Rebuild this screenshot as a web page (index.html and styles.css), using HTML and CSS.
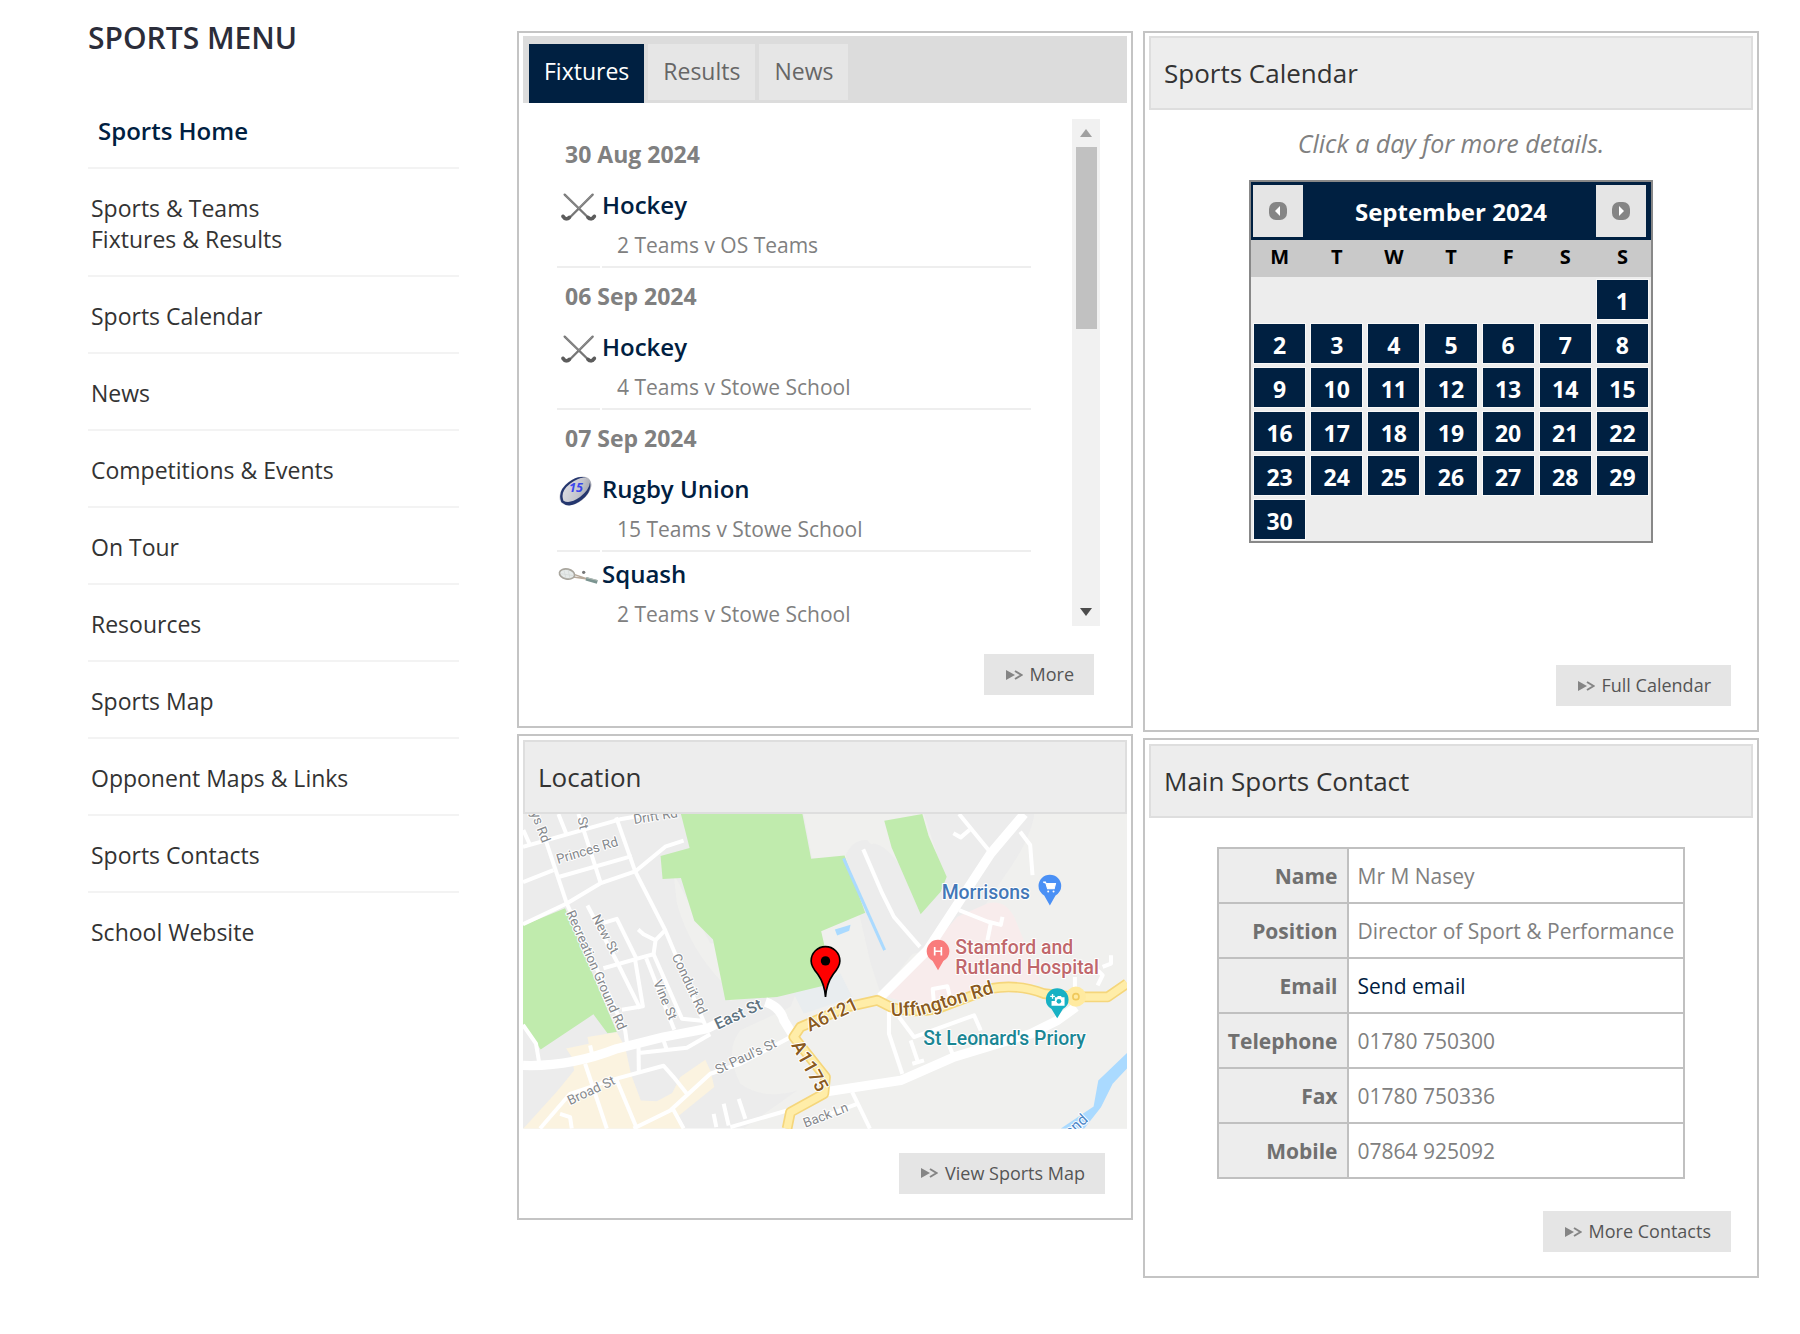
FILE: index.html
```
<!DOCTYPE html>
<html lang="en">
<head>
  <meta charset="UTF-8">
  <title>Sports Home</title>
  <link rel="stylesheet" href="styles.css">
</head>
<body>
  <!-- Shared icons -->
  <svg class="sprite" aria-hidden="true">
    <symbol id="arrow" viewBox="0 0 34 20">
      <path d="M0 0 L18 10 L0 20 Z" fill="#858585"/>
      <path d="M18 2 L31 10 L18 18" fill="none" stroke="#858585" stroke-width="4"/>
    </symbol>
    <symbol id="hockey" viewBox="0 0 120 90">
      <g fill="none" stroke-linecap="round" stroke-linejoin="round">
        <path d="M20 8 L92 78 Q102 86 109 72 M104 8 L34 78 Q22 86 15 72" stroke="#777" stroke-width="7"/>
        <path d="M90 76 Q100 86 109 73 M34 76 Q24 86 15 73" stroke="#5c5c5c" stroke-width="11"/>
        <path d="M22 9 L62 49 M102 9 L62 49" stroke="#999" stroke-width="2"/>
      </g>
    </symbol>
  </svg>

  <div class="page">
    <nav class="menu">
      <h2>SPORTS MENU</h2>
      <ul>
        <li><a class="current" href="#">Sports Home</a></li>
        <li><a href="#">Sports &amp; Teams<br>Fixtures &amp; Results</a></li>
        <li><a href="#">Sports Calendar</a></li>
        <li><a href="#">News</a></li>
        <li><a href="#">Competitions &amp; Events</a></li>
        <li><a href="#">On Tour</a></li>
        <li><a href="#">Resources</a></li>
        <li><a href="#">Sports Map</a></li>
        <li><a href="#">Opponent Maps &amp; Links</a></li>
        <li><a href="#">Sports Contacts</a></li>
        <li><a href="#">School Website</a></li>
      </ul>
    </nav>

    <div class="column">
      <section class="panel">
        <div class="tabs">
          <button type="button" class="tab active">Fixtures</button>
          <button type="button" class="tab">Results</button>
          <button type="button" class="tab">News</button>
        </div>
        <div class="scroller">
          <div class="fixtures">
            <h3>30 Aug 2024</h3>
            <div class="fixture">
              <div class="sport-icon"><svg><use href="#hockey"/></svg></div>
              <div class="sport"><a href="#">Hockey</a><p>2 Teams v OS Teams</p></div>
            </div>
            <h3>06 Sep 2024</h3>
            <div class="fixture">
              <div class="sport-icon"><svg><use href="#hockey"/></svg></div>
              <div class="sport"><a href="#">Hockey</a><p>4 Teams v Stowe School</p></div>
            </div>
            <h3>07 Sep 2024</h3>
            <div class="fixture">
              <div class="sport-icon">
                <svg viewBox="0 0 120 90">
                  <defs>
                    <linearGradient id="ball" x1="0" y1="0" x2="1" y2="1">
                      <stop offset="0" stop-color="#e4e4ea"/>
                      <stop offset=".6" stop-color="#c3c4cc"/>
                      <stop offset="1" stop-color="#8d8f9c"/>
                    </linearGradient>
                  </defs>
                  <g transform="rotate(-38 52 45)">
                    <ellipse cx="52" cy="45" rx="55" ry="34" fill="url(#ball)"/>
                    <path d="M-2 46 Q8 11 52 12 Q92 12 104 38 Q92 19 54 18 Q14 18 6 46 Q14 66 52 68 Q88 68 102 52 Q90 78 50 78 Q4 78 -2 46 Z" fill="#24366e"/>
                  </g>
                  <text x="54" y="49" class="ball-number">15</text>
                </svg>
              </div>
              <div class="sport"><a href="#">Rugby Union</a><p>15 Teams v Stowe School</p></div>
            </div>
            <div class="fixture">
              <div class="sport-icon">
                <svg viewBox="0 0 120 90">
                  <path d="M48 40 L88 54 M46 48 L88 54" stroke="#b7a99a" stroke-width="4" fill="none"/>
                  <ellipse cx="27" cy="39" rx="23" ry="15" transform="rotate(12 27 39)" fill="#e6eae9" stroke="#a8a59d" stroke-width="5"/>
                  <path d="M18 28 L24 52 M30 26 L36 52 M8 38 L46 44" stroke="#d3d8d6" stroke-width="2"/>
                  <path d="M84 53 L118 63" stroke="#7b9490" stroke-width="11"/>
                  <path d="M84 50 L118 58" stroke="#b4bdb8" stroke-width="3"/>
                  <circle cx="77" cy="34" r="5" fill="#777"/>
                </svg>
              </div>
              <div class="sport"><a href="#">Squash</a><p>2 Teams v Stowe School</p></div>
            </div>
          </div>
          <div class="scrollbar">
            <svg viewBox="0 0 12 8"><path d="M0 8 L6 0 L12 8 Z" fill="#a0a0a0"/></svg>
            <div class="thumb"></div>
            <svg viewBox="0 0 12 8"><path d="M0 0 L6 8 L12 0 Z" fill="#4c4c4c"/></svg>
          </div>
        </div>
        <div class="actions inset">
          <a class="button" href="#"><svg><use href="#arrow"/></svg>More</a>
        </div>
      </section>

      <section class="panel">
        <h2>Location</h2>
        <svg class="map" viewBox="39 252 1809 942" preserveAspectRatio="xMidYMid slice">
          <rect x="39" y="252" width="1809" height="942" fill="#ececec"/>
          <!-- lighter land -->
          <path d="M490 430 L500 520 Q540 660 640 760 L660 812 L860 780 L840 830 L690 900 Q640 960 690 1060 Q760 1110 860 1080 L700 1194 L1848 1194 L1848 252 L1570 252 Q1560 330 1480 440 L1400 560 L1290 650 L1090 700 Q1090 560 1020 480 Q1010 360 1090 340 Q1150 350 1220 500 L1300 460 Q1300 340 1270 252 L880 252 L905 385 L930 385 L930 600 L600 640 Z" fill="#f0f0ee"/>
          <path d="M1005 375 Q1030 325 1070 330 L1150 420 L1230 640 L1110 790 L1080 700 Z" fill="#ececec"/>
          <path d="M1240 252 L1570 252 Q1560 330 1440 470 L1300 640 L1230 550 L1310 470 Z" fill="#ececec"/>
          <path d="M850 790 L990 730 L1025 800 L880 850 Z" fill="#e9edef"/>
          <!-- parks -->
          <g fill="#c0ebad">
            <path d="M512 252 L876 252 L902 386 L1002 376 L1064 548 L932 603 L945 660 L945 765 L800 800 L645 810 L608 628 L552 572 L512 444 L457 447 L451 378 L538 354 Z"/>
            <path d="M39 586 L165 534 L320 905 L292 909 L250 852 L92 957 L39 880 Z"/>
            <path d="M1121 272 L1235 252 L1254 318 L1308 440 L1290 485 L1230 552 L1143 352 Z"/>
          </g>
          <!-- town centre -->
          <g fill="#fbf3e0">
            <path d="M168 954 L236 940 L232 920 L320 906 L345 950 L362 1030 L392 1110 L440 1112 L500 1080 L530 1100 L500 1140 L520 1194 L100 1194 L40 1194 L140 1084 L192 1020 L185 980 Z"/>
            <path d="M510 1040 L585 988 L600 1020 L612 1070 L500 1160 L470 1120 Z"/>
          </g>
          <!-- hospital grounds -->
          <path d="M1130 800 L1340 560 L1430 520 Q1480 505 1510 560 L1590 755 L1460 790 L1240 830 Z" fill="#f8ecec"/>
          <!-- water -->
          <g fill="#aadaff">
            <path d="M973 598 L1020 584 L1016 602 L980 616 Z"/>
            <path d="M1848 968 L1848 1014 L1805 1060 L1770 1130 L1720 1194 L1650 1194 L1748 1128 L1762 1050 Z"/>
          </g>
          <path d="M999 385 L1122 660" stroke="#aadaff" stroke-width="9"/>
          <!-- streets -->
          <g class="street">
            <path d="M39 350 L330 268 L420 252"/>
            <path d="M39 456 L130 420 M148 440 L365 378"/>
            <path d="M100 310 L170 520 L345 900 L352 950"/>
            <path d="M39 582 L170 520 L270 460 L375 424 L465 350 L520 332"/>
            <path d="M318 262 L375 424 L465 600 L585 885"/>
            <path d="M145 252 L168 310 M205 252 L272 460 M40 300 L60 345"/>
            <path d="M232 526 L318 690 L390 835 M280 578 L320 566 L378 684"/>
            <path d="M280 714 L400 680 L430 672 L436 630 L465 600 M436 630 L400 612 L384 598"/>
            <path d="M374 684 L398 828 L335 838 M408 684 L492 898 M430 672 L515 865 L582 872"/>
            <path d="M39 884 L78 940 L88 1000"/>
            <path d="M385 950 L386 1030 M460 930 L470 960 M386 968 L530 952 L600 912"/>
            <path d="M90 1194 L180 1090 L300 1050 L460 1006 L490 1040 L530 1090"/>
            <path d="M225 1000 L290 1194 M320 1050 L380 1194 M240 945 L250 990 M150 1150 L180 1160 L185 1194"/>
            <path d="M370 1194 L480 1140 L600 1030 L690 1000 L850 915 M485 1130 L520 1194"/>
            <path d="M640 1120 L655 1185 M685 1105 L705 1165 M610 1150 L618 1190"/>
            <path d="M1058 358 L1115 490 L1150 560 L1228 650"/>
            <path d="M1345 252 L1435 362 M1376 300 L1350 322 L1328 310 M1528 305 L1558 345 L1565 435"/>
            <path d="M1345 540 L1430 574 L1470 584 L1475 560 M1440 580 L1430 630"/>
            <path d="M1270 820 L1266 776 L1310 768 L1318 800 M1692 740 L1692 790 M1760 765 L1775 735 L1760 720 M1775 710 L1800 700 L1800 675"/>
            <path d="M1135 820 L1135 910 L1175 1030 M1165 860 L1210 920 L1390 855 L1410 900 M1200 930 L1222 995 M1205 1000 L1240 990 M1310 930 L1325 970"/>
            <path d="M1025 1085 L1078 1194 M960 1150 L1040 1120"/>
          </g>
          <g class="avenue">
            <path d="M39 1005 Q180 1010 320 955 L460 920 L590 895 L640 870"/>
            <path d="M765 815 Q810 830 820 870 L845 910"/>
            <path d="M1110 800 L1250 660 L1440 370 L1540 252"/>
            <path d="M940 1085 L1170 1050 L1330 980 L1560 910 L1640 870 L1695 830"/>
          </g>
          <path class="street" d="M660 1190 L830 1140"/>
          <!-- main roads -->
          <path class="main-edge" d="M830 1194 L840 1145 L940 1090 L945 1040 L850 920 L870 890 L1010 830 L1100 810 L1140 830 Q1200 850 1280 835 L1440 775 Q1520 760 1600 790 L1690 800 L1790 800 L1848 760"/>
          <path class="main-road" d="M830 1194 L840 1145 L940 1090 L945 1040 L850 920 L870 890 L1010 830 L1100 810 L1140 830 Q1200 850 1280 835 L1440 775 Q1520 760 1600 790 L1690 800 L1790 800 L1848 760"/>
          <circle cx="1695" cy="799" r="30" fill="#ffeaa0"/>
          <circle cx="1695" cy="799" r="9" fill="#ffeaa0" stroke="#f0c95c" stroke-width="5"/>
          <!-- street names -->
          <g class="street-name">
            <text transform="translate(62 250) rotate(69)">ys Rd</text>
            <text transform="translate(202 264) rotate(78)">St</text>
            <text transform="translate(372 282) rotate(-9)">Drift Rd</text>
            <text transform="translate(144 402) rotate(-17)">Princes Rd</text>
            <text transform="translate(168 548) rotate(66)">Recreation Ground Rd</text>
            <text transform="translate(244 562) rotate(62)">New St</text>
            <text transform="translate(428 756) rotate(67)">Vine St</text>
            <text transform="translate(484 678) rotate(65)">Conduit Rd</text>
            <text transform="translate(180 1124) rotate(-25)">Broad St</text>
            <text transform="translate(622 1032) rotate(-25)">St Paul's St</text>
            <text transform="translate(884 1192) rotate(-21)">Back Ln</text>
          </g>
          <text class="east" transform="translate(622 898) rotate(-25)">East St</text>
          <g class="road-name">
            <text transform="translate(898 904) rotate(-25)">A6121</text>
            <text transform="translate(842 944) rotate(61)">A1175</text>
            <text transform="translate(1142 858) rotate(-3)">Uff</text>
            <text transform="translate(1222 858) rotate(-17)">ington Rd</text>
          </g>
          <text class="river" transform="translate(1678 1222) rotate(-43)">and</text>
          <!-- places -->
          <text class="place shop" x="1293" y="506">Morrisons</text>
          <text class="place hospital" x="1334" y="672">Stamford and</text>
          <text class="place hospital" x="1334" y="732">Rutland Hospital</text>
          <text class="place priory" x="1238" y="944">St Leonard's Priory</text>
          <g>
            <path d="M1617 526 L1600 496 Q1583 486 1583 468 A34 34 0 0 1 1651 468 Q1651 486 1634 496 Z" fill="#4a90f5"/>
            <path d="M1597 456 L1604 456 L1610 476 L1630 476 L1634 460 L1606 460 Z" fill="#fff" stroke="#fff" stroke-width="3"/>
            <circle cx="1612" cy="484" r="3" fill="#fff"/><circle cx="1628" cy="484" r="3" fill="#fff"/>
            <path d="M1282 720 L1266 692 Q1248 682 1248 663 A34 34 0 0 1 1316 663 Q1316 682 1298 692 Z" fill="#f97c7c"/>
            <path d="M1272 650 V676 M1292 650 V676 M1272 663 H1292" stroke="#fff" stroke-width="5"/>
            <path d="M1639 864 L1622 836 Q1605 826 1605 808 A34 34 0 0 1 1673 808 Q1673 826 1656 836 Z" fill="#17b1c4"/>
            <path d="M1632 801 H1638 L1641 797 H1650 L1653 801 H1661 V826 H1622 V812 H1632 Z" fill="#fff"/>
            <path d="M1625 791 V805 M1618 798 H1632" stroke="#fff" stroke-width="4"/>
            <circle cx="1644" cy="813" r="7" fill="#17b1c4"/>
          </g>
          <path d="M945 800 Q942 760 922 732 Q902 708 902 692 A43 43 0 0 1 988 692 Q988 708 968 732 Q948 760 945 800 Z" fill="#f00" stroke="#000" stroke-width="5"/>
          <circle cx="945" cy="692" r="14" fill="#000"/>
        </svg>
        <div class="actions">
          <a class="button" href="#"><svg><use href="#arrow"/></svg>View Sports Map</a>
        </div>
      </section>
    </div>

    <div class="column">
      <section class="panel">
        <h2>Sports Calendar</h2>
        <div class="calendar-area">
          <p>Click a day for more details.</p>
          <table class="calendar">
            <thead>
              <tr class="month">
                <th><button type="button" aria-label="Previous month"><svg viewBox="0 0 18 18"><rect width="18" height="18" rx="7" fill="#858585"/><path d="M11 4 L6 9 L11 14 Z" fill="#fff"/></svg></button></th>
                <th colspan="5">September 2024</th>
                <th><button type="button" aria-label="Next month"><svg viewBox="0 0 18 18"><rect width="18" height="18" rx="7" fill="#858585"/><path d="M7 4 L12 9 L7 14 Z" fill="#fff"/></svg></button></th>
              </tr>
              <tr class="weekdays">
                <th>M</th><th>T</th><th>W</th><th>T</th><th>F</th><th>S</th><th>S</th>
              </tr>
            </thead>
            <tbody>
              <tr><td colspan="6"></td><td><a href="#">1</a></td></tr>
              <tr><td><a href="#">2</a></td><td><a href="#">3</a></td><td><a href="#">4</a></td><td><a href="#">5</a></td><td><a href="#">6</a></td><td><a href="#">7</a></td><td><a href="#">8</a></td></tr>
              <tr><td><a href="#">9</a></td><td><a href="#">10</a></td><td><a href="#">11</a></td><td><a href="#">12</a></td><td><a href="#">13</a></td><td><a href="#">14</a></td><td><a href="#">15</a></td></tr>
              <tr><td><a href="#">16</a></td><td><a href="#">17</a></td><td><a href="#">18</a></td><td><a href="#">19</a></td><td><a href="#">20</a></td><td><a href="#">21</a></td><td><a href="#">22</a></td></tr>
              <tr><td><a href="#">23</a></td><td><a href="#">24</a></td><td><a href="#">25</a></td><td><a href="#">26</a></td><td><a href="#">27</a></td><td><a href="#">28</a></td><td><a href="#">29</a></td></tr>
              <tr><td><a href="#">30</a></td><td colspan="6"></td></tr>
            </tbody>
          </table>
        </div>
        <div class="actions">
          <a class="button" href="#"><svg><use href="#arrow"/></svg>Full Calendar</a>
        </div>
      </section>

      <section class="panel">
        <h2>Main Sports Contact</h2>
        <table class="contact">
          <tr><th>Name</th><td>Mr M Nasey</td></tr>
          <tr><th>Position</th><td>Director of Sport &amp; Performance</td></tr>
          <tr><th>Email</th><td><a href="#">Send email</a></td></tr>
          <tr><th>Telephone</th><td>01780 750300</td></tr>
          <tr><th>Fax</th><td>01780 750336</td></tr>
          <tr><th>Mobile</th><td>07864 925092</td></tr>
        </table>
        <div class="actions">
          <a class="button" href="#"><svg><use href="#arrow"/></svg>More Contacts</a>
        </div>
      </section>
    </div>
  </div>
</body>
</html>
```
FILE: styles.css
```
* {
  box-sizing: border-box;
}

body {
  margin: 0;
  background: #fff;
  color: #808080;
  font-family: "Open Sans", sans-serif;
  font-size: 21px;
}

h2, h3, p, ul {
  margin: 0;
  padding: 0;
}

a {
  color: #002041;
  text-decoration: none;
}

button {
  border: 0;
  font-family: inherit;
}

.sprite {
  display: none;
}

.page {
  display: flex;
  align-items: flex-start;
  padding: 0 41px 54px 88px;
}

/* Menu */
.menu {
  width: 371px;
  margin-right: 58px;
  padding-top: 18px;
}

.menu h2 {
  margin-bottom: 33px;
  color: #2b2d3a;
  font-size: 30px;
  font-weight: 600;
  line-height: 40px;
}

.menu ul {
  list-style: none;
}

.menu li {
  padding: 24px 3px 20px;
  border-bottom: 2px solid #f3f3f3;
  font-size: 23px;
  line-height: 31px;
}

.menu li:last-child {
  border-bottom: 0;
}

.menu a {
  color: #333;
}

.menu .current {
  padding-left: 7px;
  color: #002041;
  font-size: 24px;
  font-weight: 600;
}

/* Panels */
.column {
  flex: 1;
  display: flex;
  flex-direction: column;
  gap: 6px;
  padding-top: 31px;
}

.column + .column {
  margin-left: 10px;
}

.panel {
  padding: 4px;
  border: 2px solid #c4c4c4;
}

.panel:first-child {
  padding-top: 3px;
}

.panel h2 {
  padding: 0 13px;
  border: 2px solid #dedede;
  background: #ededed;
  color: #333;
  font-size: 26px;
  font-weight: normal;
  line-height: 70px;
}

.actions {
  display: flex;
  justify-content: flex-end;
  padding: 24px 22px 20px;
}

.actions.inset {
  padding: 28px 33px 27px;
}

.button {
  display: flex;
  align-items: center;
  gap: 7px;
  padding: 0 20px 0 22px;
  background: #e5e5e5;
  color: #555;
  font-size: 18px;
  line-height: 41px;
}

.button svg {
  width: 17px;
  height: 10px;
}

/* Fixtures */
.tabs {
  display: flex;
  align-items: flex-start;
  gap: 4px;
  padding: 8px 6px 0;
  background: #dcdcdc;
}

.tab {
  height: 56px;
  padding: 0 15px 2px;
  background: #e6e6e6;
  color: #666;
  font-size: 23px;
}

.tab.active {
  height: 59px;
  padding-bottom: 5px;
  background: #002041;
  color: #fff;
}

.scroller {
  display: flex;
  height: 507px;
  margin: 16px 27px 0 34px;
  overflow: hidden;
}

.fixtures {
  flex: 1;
  margin-right: 41px;
  padding-top: 7px;
}

.fixtures h3 {
  padding-left: 8px;
  font-size: 23px;
  font-weight: bold;
  line-height: 57px;
}

.fixture {
  display: grid;
  grid-template-columns: 43px 1fr;
  gap: 2px;
}

.sport-icon, .sport {
  border-bottom: 2px solid #eee;
  padding-bottom: 3px;
}

.sport-icon svg {
  display: block;
  width: 40px;
  height: 30px;
  margin: 9px 0 0 1px;
}

.sport a {
  display: block;
  font-size: 24px;
  font-weight: 600;
  line-height: 44px;
}

.sport p {
  padding-left: 15px;
  line-height: 36px;
}

.ball-number {
  fill: #3a46ee;
  font-size: 38px;
  font-style: italic;
  font-weight: bold;
  text-anchor: middle;
}

.scrollbar {
  display: flex;
  flex-direction: column;
  align-items: center;
  width: 28px;
  padding: 10px 0;
  background: #f1f1f1;
}

.scrollbar svg {
  width: 12px;
  height: 8px;
}

.thumb {
  width: 21px;
  height: 182px;
  margin: 10px 0 auto;
  background: #c1c1c1;
}

/* Map */
.map {
  display: block;
  width: 100%;
  height: auto;
}

.map text {
  font-family: Roboto, sans-serif;
  stroke: #fff;
  stroke-width: 6px;
  stroke-linejoin: round;
  paint-order: stroke;
}

.street, .avenue, .main-edge, .main-road {
  fill: none;
  stroke: #fff;
  stroke-width: 12px;
  stroke-linejoin: round;
}

.avenue {
  stroke-width: 28px;
}

.main-edge {
  stroke: #f5d67b;
  stroke-width: 32px;
}

.main-road {
  stroke: #ffeda8;
  stroke-width: 22px;
}

.street-name {
  fill: #85888c;
  font-size: 40px;
}

.east {
  fill: #5f7380;
  font-size: 48px;
  font-weight: 500;
}

.road-name {
  fill: #8a5a20;
  font-size: 56px;
  font-weight: 500;
}

.river {
  fill: #4a86c8;
  font-size: 46px;
}

.place {
  font-size: 58px;
  font-weight: 500;
}

.shop {
  fill: #4377b8;
}

.hospital {
  fill: #c0676b;
}

.priory {
  fill: #1a8694;
}

/* Calendar */
.calendar-area {
  min-height: 531px;
}

.calendar-area p {
  padding-top: 13px;
  font-size: 25px;
  font-style: italic;
  line-height: 40px;
  text-align: center;
}

.calendar {
  width: 404px;
  margin: 17px auto 0;
  border: 2px solid #888;
  border-spacing: 0;
  background: #ededed;
  table-layout: fixed;
  text-align: center;
}

.calendar th, .calendar td {
  padding: 0;
}

.month th {
  height: 58px;
  background: #002041;
  color: #fff;
  font-size: 24px;
}

.month button {
  display: block;
  width: 50px;
  height: 52px;
  margin: 0 2px;
  padding: 0;
  background: #e5e5e5;
}

.month svg {
  display: block;
  width: 18px;
  height: 18px;
  margin: auto;
}

.weekdays th {
  height: 37px;
  background: #c9c9c9;
  color: #000;
  font-size: 20px;
  line-height: 34px;
  vertical-align: top;
}

.calendar td {
  height: 44px;
}

.calendar td a {
  display: block;
  margin: 2px 3px;
  padding-top: 3px;
  background: #002041;
  box-shadow: 0 0 0 1px #f8f8f8;
  color: #fff;
  font-size: 23px;
  font-weight: bold;
  line-height: 36px;
}

/* Contact */
.contact {
  margin: 29px auto 8px;
  border-collapse: collapse;
}

.contact th, .contact td {
  height: 55px;
  padding: 0 9px;
  border: 2px solid #c0c0c0;
}

.contact th {
  background: #ededed;
  color: #707070;
  text-align: right;
}
```
